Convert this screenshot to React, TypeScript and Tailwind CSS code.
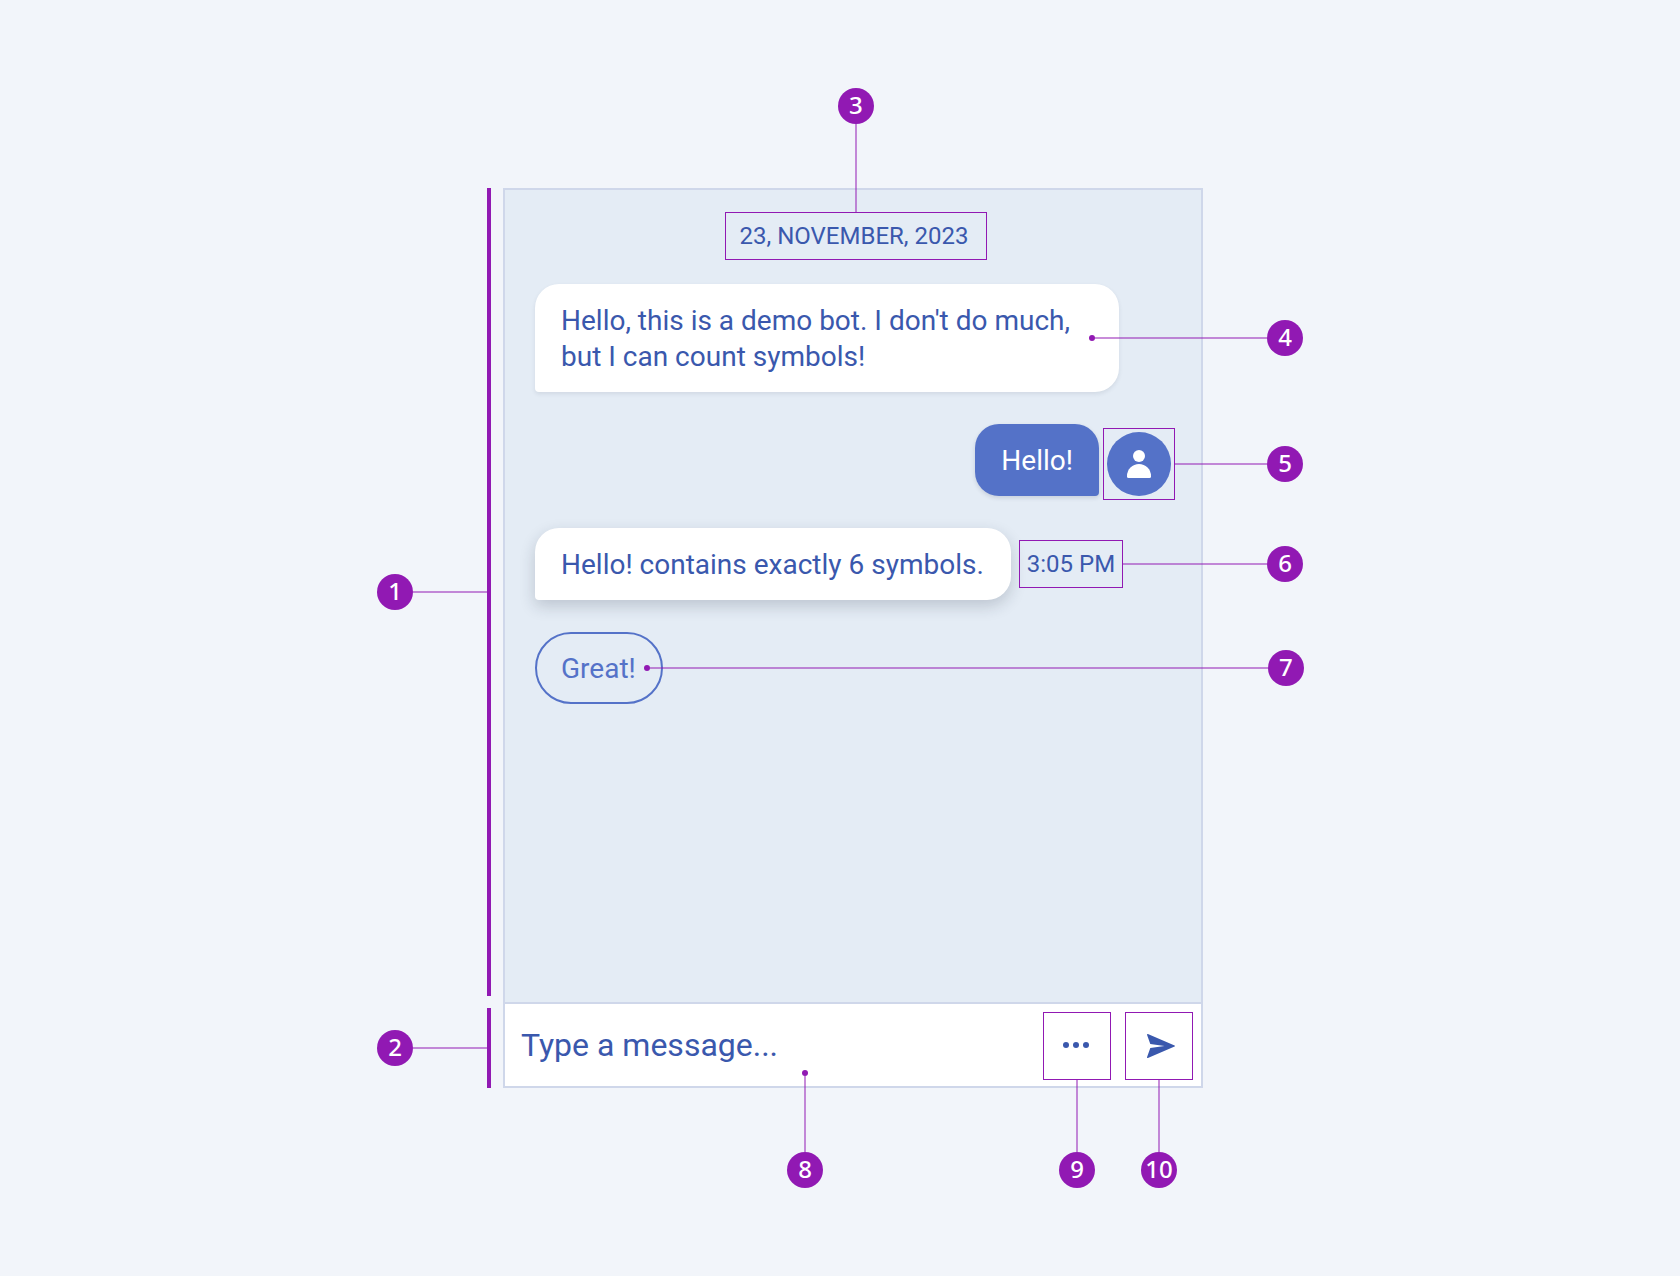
import React from "react";

type Side = "left" | "right" | "top" | "bottom";

const callout: Record<Side, string> = {
  right: "left-full top-1/2 -translate-y-1/2 flex-row",
  left: "right-full top-1/2 -translate-y-1/2 flex-row-reverse",
  top: "bottom-full left-1/2 -translate-x-1/2 flex-col-reverse",
  bottom: "top-full left-1/2 -translate-x-1/2 flex-col",
};

function Callout({
  n,
  side,
  line,
  dot = false,
  className = "",
}: {
  n: number;
  side: Side;
  line: string;
  dot?: boolean;
  className?: string;
}) {
  const horizontal = side === "left" || side === "right";
  return (
    <span className={`pointer-events-none absolute z-10 flex items-center ${callout[side]} ${className}`}>
      {dot && <span className="size-1.5 shrink-0 rounded-full bg-[#9119b3]" />}
      <span className={`shrink-0 bg-[#9119b3]/50 ${horizontal ? "h-0.5" : "w-0.5"} ${line}`} />
      <span className="flex size-9 shrink-0 items-center justify-center rounded-full bg-[#9119b3] pb-0.5 font-['Noto_Sans',sans-serif] text-2xl leading-8 font-medium text-white">
        {n}
      </span>
    </span>
  );
}

export default function App() {
  return (
    <main className="flex min-h-screen items-center justify-center bg-[#f2f5fa] font-['Roboto',sans-serif] text-[28px] leading-9 text-[#3a58ad]">
      <div className="flex w-full max-w-[926px] pr-[100px] pl-[110px]">
        <div className="mr-3 flex w-1 shrink-0 flex-col gap-3">
          <div className="relative flex-1 bg-[#9119b3]">
            <Callout n={1} side="left" line="w-[74px]" />
          </div>
          <div className="relative h-20 bg-[#9119b3]">
            <Callout n={2} side="left" line="w-[74px]" />
          </div>
        </div>

        <section className="min-w-0 flex-1 border-2 border-[#cfd7ea] bg-[#e4ecf5]" aria-label="Chat">
          <div className="flex min-h-[812px] flex-col gap-8 px-[30px] pt-[22px]">
            <time
              dateTime="2023-11-23"
              className="relative -mb-2 ml-1.5 self-center border border-[#9119b3] py-[5px] pr-[18px] pl-3.5 text-2xl leading-9"
            >
              23, NOVEMBER, 2023
              <Callout n={3} side="top" line="h-[89px]" />
            </time>

            <div className="relative max-w-[584px] rounded-3xl rounded-bl-sm bg-white px-[26px] pt-[19px] pb-[17px] shadow-[0_2px_4px_rgba(40,50,80,0.1)]">
              <p>Hello, this is a demo bot. I don't do much, but I can count symbols!</p>
              <Callout n={4} side="right" line="w-[172px]" dot className="-ml-[30px]" />
            </div>

            <div className="flex items-end justify-end gap-2">
              <p className="rounded-3xl rounded-br-sm bg-[#5472c8] px-[26px] pt-[19px] pb-[17px] text-white shadow-[0_2px_4px_rgba(40,50,80,0.15)]">
                Hello!
              </p>
              <div className="relative -m-1 border border-[#9119b3] p-[3px]">
                <div className="size-16 rounded-full bg-[#5472c8]">
                  <svg viewBox="0 0 64 64" className="size-16 fill-white" role="img" aria-label="User">
                    <circle cx="32" cy="24" r="6" />
                    <path d="M20 44a12 12 0 0 1 24 0v.5a1.500 1.500 0 0 1-1.500 1.500h-21a1.500 1.500 0 0 1-1.500-1.500Z" />
                  </svg>
                </div>
                <Callout n={5} side="right" line="w-[93px]" />
              </div>
            </div>

            <div className="flex items-center gap-2">
              <p className="rounded-3xl rounded-bl-sm bg-white pt-[19px] pr-[27px] pb-[17px] pl-[26px] shadow-[0_6px_16px_rgba(30,40,60,0.2)]">
                Hello! contains exactly 6 symbols.
              </p>
              <time dateTime="15:05" className="relative border border-[#9119b3] px-[7px] py-[5px] text-2xl leading-9">
                3:05 PM
                <Callout n={6} side="right" line="w-[145px]" />
              </time>
            </div>

            <button
              type="button"
              className="relative self-start rounded-full border-2 border-[#5472c8] pt-[17px] pr-[25px] pb-[15px] pl-6 text-[#5472c8]"
            >
              Great!
              <Callout n={7} side="right" line="w-[618px]" dot className="-ml-[17px]" />
            </button>
          </div>

          <form
            className="flex items-center border-t-2 border-[#cfd7ea] bg-white pt-2 pr-2 pb-1.5 pl-4"
            onSubmit={(e) => e.preventDefault()}
          >
            <div className="relative min-w-0 flex-1">
              <input
                type="text"
                aria-label="Message"
                placeholder="Type a message..."
                className="block w-full bg-transparent pb-0.5 text-[32px] leading-10 outline-none placeholder:text-[#3a58ad] placeholder:opacity-100"
              />
              <Callout n={8} side="bottom" line="h-[76px]" dot className="mt-[3px] ml-[23px]" />
            </div>
            <button
              type="button"
              aria-label="More actions"
              className="relative mr-3.5 flex size-[68px] items-center justify-center border border-[#9119b3]"
            >
              <svg viewBox="0 0 32 32" className="size-8 fill-[#3a58ad]" aria-hidden="true">
                <circle cx="5" cy="15" r="3" />
                <circle cx="15" cy="15" r="3" />
                <circle cx="25" cy="15" r="3" />
              </svg>
              <Callout n={9} side="bottom" line="h-[73px]" />
            </button>
            <button
              type="submit"
              aria-label="Send"
              className="relative flex size-[68px] items-center justify-center border border-[#9119b3]"
            >
              <svg viewBox="0 0 32 32" className="size-8 fill-[#3a58ad]" aria-hidden="true">
                <path d="M4.900 4.100 31.600 15.500c.5.2.5.8 0 1L4.900 27.900c-.6.2-1-.2-.8-.8L7.300 18 21.500 16 7.300 14 4.100 4.900c-.2-.6.2-1 .8-.8Z" />
              </svg>
              <Callout n={10} side="bottom" line="h-[73px]" />
            </button>
          </form>
        </section>
      </div>
    </main>
  );
}
